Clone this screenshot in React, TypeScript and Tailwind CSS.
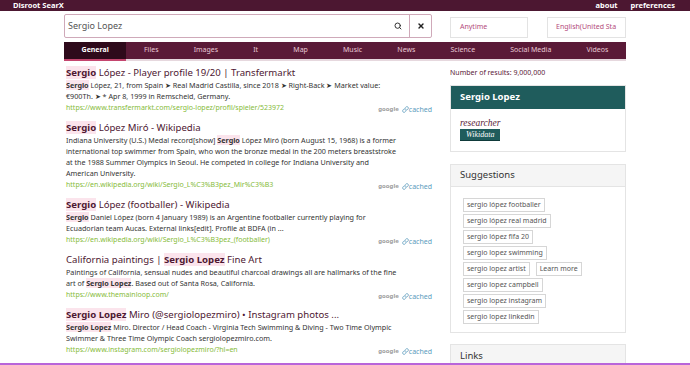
import React from "react";
import { Search, X, Link as LinkIcon } from "lucide-react";

const H = ({ children }: { children: React.ReactNode }) => (
  <strong className="font-bold bg-[#fbe4ec]">{children}</strong>
);

type R = {
  title: React.ReactNode;
  lines: React.ReactNode[];
  url: string;
};

const results: R[] = [
  {
    title: (
      <>
        <H>Sergio</H> López - Player profile 19/20 | Transfermarkt
      </>
    ),
    lines: [
      <>
        <H>Sergio</H> López, 21, from Spain ➤ Real Madrid Castilla, since 2018 ➤ Right-Back ➤ Market value:
      </>,
      <>€900Th. ➤ * Apr 8, 1999 in Remscheid, Germany.</>,
    ],
    url: "https://www.transfermarkt.com/sergio-lopez/profil/spieler/523972",
  },
  {
    title: (
      <>
        <H>Sergio</H> López Miró - Wikipedia
      </>
    ),
    lines: [
      <>
        Indiana University (U.S.) Medal record[show] <H>Sergio</H> López Miró (born August 15, 1968) is a former
      </>,
      <>international top swimmer from Spain, who won the bronze medal in the 200 meters breaststroke</>,
      <>at the 1988 Summer Olympics in Seoul. He competed in college for Indiana University and</>,
      <>American University.</>,
    ],
    url: "https://en.wikipedia.org/wiki/Sergio_L%C3%B3pez_Mir%C3%B3",
  },
  {
    title: (
      <>
        <H>Sergio</H> López (footballer) - Wikipedia
      </>
    ),
    lines: [
      <>
        <H>Sergio</H> Daniel López (born 4 January 1989) is an Argentine footballer currently playing for
      </>,
      <>Ecuadorian team Aucas. External links[edit]. Profile at BDFA (in ...</>,
    ],
    url: "https://en.wikipedia.org/wiki/Sergio_L%C3%B3pez_(footballer)",
  },
  {
    title: (
      <>
        California paintings | <H>Sergio Lopez</H> Fine Art
      </>
    ),
    lines: [
      <>Paintings of California, sensual nudes and beautiful charcoal drawings all are hallmarks of the fine</>,
      <>
        art of <H>Sergio Lopez</H>. Based out of Santa Rosa, California.
      </>,
    ],
    url: "https://www.themainloop.com/",
  },
  {
    title: (
      <>
        <H>Sergio Lopez</H> Miro (@sergiolopezmiro) • Instagram photos ...
      </>
    ),
    lines: [
      <>
        <H>Sergio Lopez</H> Miro. Director / Head Coach - Virginia Tech Swimming &amp; Diving - Two Time Olympic
      </>,
      <>Swimmer &amp; Three Time Olympic Coach sergiolopezmiro.com.</>,
    ],
    url: "https://www.instagram.com/sergiolopezmiro/?hl=en",
  },
];

const tabs = ["General", "Files", "Images", "It", "Map", "Music", "News", "Science", "Social Media", "Videos"];

const suggestionRows: string[][] = [
  ["sergio lópez footballer"],
  ["sergio lópez real madrid"],
  ["sergio lópez fifa 20"],
  ["sergio lopez swimming"],
  ["sergio lopez artist", "Learn more"],
  ["sergio lopez campbell"],
  ["sergio lopez instagram"],
  ["sergio lopez linkedin"],
];

export default function App() {
  return (
    <div className="h-[365px] w-[690px] overflow-hidden flex flex-col bg-white font-['Noto_Sans',sans-serif]">
      <div className="flex-1 overflow-hidden">
        {/* top bar */}
        <div className="h-[11px] bg-[#4c1731] flex items-center justify-between px-[13px] text-white font-bold text-[7.5px] leading-none">
          <span>Disroot SearX</span>
          <div className="flex gap-[13px] pr-[2px]">
            <span>about</span>
            <span>preferences</span>
          </div>
        </div>

        <div className="w-[562px] ml-[64px]">
          {/* search row */}
          <div className="flex items-center mt-[3px] h-[24px]">
            <div className="flex h-[24px] w-[368px] border border-[#cfa9b9] rounded-[2px]">
              <div className="flex-1 flex items-center pl-[3px] text-[9px] text-[#555]">Sergio Lopez</div>
              <div className="w-[22px] flex items-center justify-center">
                <Search size={8} strokeWidth={3} color="#333" />
              </div>
              <div className="w-[22px] flex items-center justify-center border-l border-[#cfa9b9]">
                <X size={8} strokeWidth={4} color="#222" />
              </div>
            </div>
            <div className="ml-[18px] mt-[3px] h-[21px] w-[78px] border border-[#e3e3e3] flex items-center pl-[9px] text-[7px] text-[#b44c7c]">
              Anytime
            </div>
            <div className="ml-[19px] mt-[3px] h-[21px] w-[79px] border border-[#e3e3e3] flex items-center pl-[8px] text-[7px] text-[#b44c7c] whitespace-nowrap overflow-hidden">
              English(United Sta
            </div>
          </div>

          {/* tabs */}
          <div className="mt-[4px] flex h-[19px] bg-[#5a1a37] border-b-2 border-[#e6d8de]">
            {tabs.map((t, i) => (
              <div
                key={t}
                className={
                  "flex-auto flex items-center justify-center text-[7px] whitespace-nowrap " +
                  (i === 0
                    ? "bg-[#2e0a1b] text-white font-bold border-b-2 border-[#c4466f] -mb-[2px]"
                    : "text-[#e8c9d6]")
                }
              >
                {t}
              </div>
            ))}
          </div>

          {/* main */}
          <div className="flex gap-[18px]">
            <div className="w-[368px] pl-[2px] pt-[5px]">
              {results.map((r, i) => (
                <div key={i} className="mb-[8px]">
                  <div className="text-[9.6px] leading-[14px] text-[#4e1832] whitespace-nowrap">{r.title}</div>
                  <div className="text-[7.2px] leading-[11px] text-[#333]">
                    {r.lines.map((l, j) => (
                      <div key={j} className="whitespace-nowrap">
                        {l}
                      </div>
                    ))}
                  </div>
                  <div className="flex justify-between items-start h-[11px]">
                    <div className="text-[7px] leading-[11px] text-[#86bb3a] whitespace-nowrap">{r.url}</div>
                    <div className="flex items-center gap-[3px] mt-[2px] text-[7px] leading-[11px]">
                      <span className="text-[#9c9c9c] font-bold text-[6px]">google</span>
                      <span className="flex items-center text-[#5b9bbd]">
                        <LinkIcon size={7} strokeWidth={2.5} />
                        cached
                      </span>
                    </div>
                  </div>
                </div>
              ))}
            </div>

            <div className="w-[176px] pt-[7px]">
              <div className="text-[7px] leading-[10px] text-[#5a1a37]">Number of results: 9,000,000</div>

              <div className="mt-[7px] border border-[#e4e4e4]">
                <div className="h-[23px] bg-[#1f5c5c] flex items-center pl-[9px] text-white font-bold text-[9.5px]">
                  Sergio Lopez
                </div>
                <div className="h-[42px] pl-[9px] pt-[9px]">
                  <div className="font-['Liberation_Serif',serif] italic text-[9.5px] leading-[11px] text-[#5a1a37]">
                    researcher
                  </div>
                  <div className="w-fit bg-[#1f5c5c] border-b border-[#0f3a3a] px-[6px] font-['Liberation_Serif',serif] italic text-[8px] leading-[11px] text-white">
                    Wikidata
                  </div>
                </div>
              </div>

              <div className="mt-[12px] border border-[#e4e4e4] h-[169px]">
                <div className="h-[22px] bg-[#f5f5f5] border-b border-[#e4e4e4] flex items-center pl-[9px] text-[9.5px] text-[#333]">
                  Suggestions
                </div>
                <div className="pl-[12px] pt-[11px] flex flex-col gap-[2px]">
                  {suggestionRows.map((row, i) => (
                    <div key={i} className="flex gap-[6px]">
                      {row.map((s) => (
                        <div
                          key={s}
                          className="h-[14px] border border-[#d6d6d6] px-[3px] flex items-center text-[7px] text-[#555] whitespace-nowrap"
                        >
                          {s}
                        </div>
                      ))}
                    </div>
                  ))}
                </div>
              </div>

              <div className="mt-[11px] border border-[#e4e4e4] h-[40px]">
                <div className="h-[22px] bg-[#f5f5f5] flex items-center pl-[9px] text-[9.5px] text-[#333]">
                  Links
                </div>
              </div>
            </div>
          </div>
        </div>
      </div>
      <div className="h-[2px] bg-[#b865da]" />
    </div>
  );
}
